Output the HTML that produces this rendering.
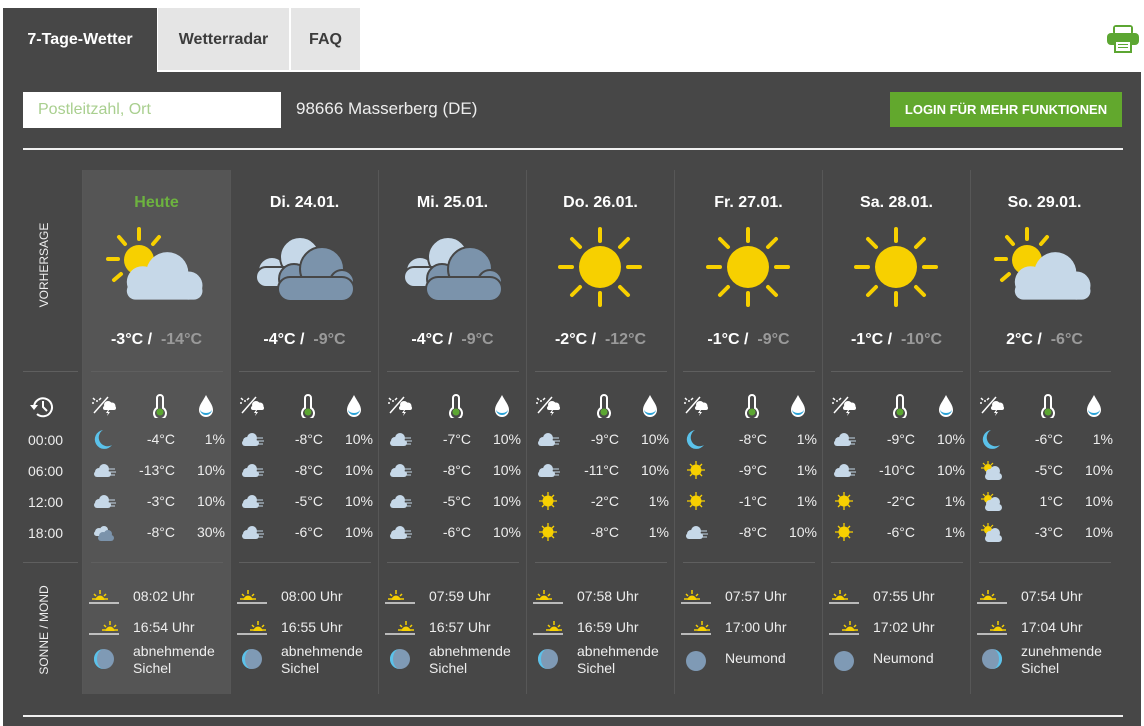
<!DOCTYPE html>
<html><head><meta charset="utf-8">
<style>
*{margin:0;padding:0;box-sizing:border-box}
body{width:1144px;height:726px;background:#fff;font-family:"Liberation Sans",Arial,sans-serif;position:relative;overflow:hidden;color:#fff}
.abs{position:absolute}
#main{position:absolute;left:3px;top:72px;width:1138px;height:654px;background:#474747}
.tab{position:absolute;top:8px;height:64px;line-height:64px;text-align:center;font-weight:bold;font-size:16px}
.col{position:absolute;top:170px;width:148px;height:524px;border-right:1px solid #575757}
.col.today{background:#555}
.day{position:absolute;top:24px;left:0;width:147px;text-align:center;font-weight:bold;font-size:16px}
.big{position:absolute;top:57px;left:23px}
.tmp{position:absolute;top:161px;left:0;width:147px;text-align:center;font-weight:bold;font-size:16px}
.tmp span{color:#9a9a9a;font-weight:bold}
.hr{position:absolute;left:8px;width:132px;height:1px;background:#5f5f5f}
.hd{position:absolute;top:224px}
.r{position:absolute;left:0;width:147px;height:20px;font-size:14px;line-height:20px;color:#eee}
.r svg{position:absolute;left:8px;top:0}
.r .t{position:absolute;right:55px}
.r .p{position:absolute;right:5px}
.ss{position:absolute;left:0;width:147px;height:20px;font-size:14px;line-height:20px;color:#eee}
.ss svg{position:absolute;left:5px;top:0}
.ss .u{position:absolute;left:50px}
.mo{position:absolute;left:0;top:473px;width:147px;font-size:14px;line-height:17px;color:#eee}
.mo svg{position:absolute;left:10px;top:5px}
.mo .u{position:absolute;left:50px;top:0}
</style></head><body>
<svg width="0" height="0" style="position:absolute">
<defs>
<symbol id="cloudL" viewBox="0 0 100 60"><g fill="#c6d8e8"><circle cx="28" cy="38" r="18"/><circle cx="56" cy="28" r="24"/><circle cx="80" cy="42" r="16"/><rect x="10" y="38" width="86" height="20" rx="10"/></g></symbol>
<symbol id="sc" viewBox="0 0 100 80"><g stroke="#f7d000" stroke-width="4" stroke-linecap="round"><line x1="33" y1="2" x2="33" y2="12"/><line x1="13" y1="10" x2="19" y2="17"/><line x1="53" y1="10" x2="47" y2="17"/><line x1="2" y1="32" x2="12" y2="32"/><line x1="8" y1="53" x2="15" y2="47"/></g><circle cx="33" cy="33" r="15" fill="#f7d000"/><use href="#cloudL" x="12" y="18" width="88" height="60"/></symbol>
<symbol id="cc" viewBox="0 0 100 80"><g fill="#c6d8e8" stroke="#474747" stroke-width="2"><circle cx="18" cy="44" r="14"/><circle cx="46" cy="30" r="20"/><rect x="2" y="40" width="64" height="20" rx="10"/></g><g fill="#7b93ab" stroke="#474747" stroke-width="2"><circle cx="40" cy="52" r="15"/><circle cx="68" cy="42" r="22"/><circle cx="88" cy="55" r="12"/><rect x="24" y="50" width="76" height="24" rx="12"/></g></symbol>
<symbol id="sun" viewBox="0 0 100 80"><g stroke="#f7d000" stroke-width="4" stroke-linecap="round"><line x1="50" y1="2" x2="50" y2="14"/><line x1="50" y1="66" x2="50" y2="78"/><line x1="10" y1="40" x2="22" y2="40"/><line x1="78" y1="40" x2="90" y2="40"/><line x1="22" y1="12" x2="30" y2="20"/><line x1="70" y1="60" x2="78" y2="68"/><line x1="78" y1="12" x2="70" y2="20"/><line x1="30" y1="60" x2="22" y2="68"/></g><circle cx="50" cy="40" r="21" fill="#f7d000"/></symbol>
<symbol id="s_moon" viewBox="0 0 26 20"><path d="M12 1 A9.5 9.5 0 1 0 21 16 A8 8 0 0 1 12 1Z" fill="#5bc2ea"/></symbol>
<symbol id="s_cl" viewBox="0 0 26 20"><g fill="#c6d8e8"><circle cx="8" cy="12" r="4"/><circle cx="13" cy="9" r="5"/><rect x="3" y="11" width="17" height="6" rx="3"/></g><g stroke="#c6d8e8" stroke-width="1"><line x1="17" y1="9" x2="24" y2="9"/><line x1="19" y1="12" x2="25" y2="12"/><line x1="19" y1="15" x2="24" y2="15"/></g></symbol>
<symbol id="s_dc" viewBox="0 0 26 20"><g fill="#c6d8e8"><circle cx="8" cy="10" r="4"/><circle cx="13" cy="8" r="4"/><rect x="3" y="9" width="14" height="5" rx="2.5"/></g><g fill="#7b93ab"><circle cx="12" cy="14" r="4"/><circle cx="17" cy="12" r="4"/><rect x="7" y="13" width="16" height="6" rx="3"/></g></symbol>
<symbol id="s_sun" viewBox="0 0 26 20"><g stroke="#f7d000" stroke-width="1.3"><line x1="13" y1="1" x2="13" y2="19"/><line x1="4" y1="10" x2="22" y2="10"/><line x1="7" y1="4" x2="19" y2="16"/><line x1="19" y1="4" x2="7" y2="16"/></g><circle cx="13" cy="10" r="5.5" fill="#f7d000"/></symbol>
<symbol id="s_sc" viewBox="0 0 26 20"><g stroke="#f7d000" stroke-width="1.2"><line x1="9" y1="1" x2="9" y2="4"/><line x1="2" y1="8" x2="5" y2="8"/><line x1="4" y1="3" x2="6" y2="5"/><line x1="14" y1="3" x2="12" y2="5"/></g><circle cx="9" cy="8" r="4" fill="#f7d000"/><g fill="#c6d8e8"><circle cx="11" cy="13" r="4"/><circle cx="16" cy="11" r="5"/><rect x="6" y="13" width="17" height="7" rx="3.5"/></g></symbol>
<symbol id="h_st" viewBox="0 0 26 22"><g stroke="#fff" stroke-width="1.5" fill="none"><line x1="3" y1="19" x2="17" y2="3"/><line x1="6" y1="6" x2="6" y2="8"/><line x1="1" y1="9" x2="3" y2="9"/><line x1="2" y1="4" x2="4" y2="6"/><line x1="10" y1="4" x2="8" y2="6"/></g><g fill="#fff"><circle cx="17" cy="11" r="4"/><circle cx="21" cy="12" r="3.5"/><rect x="12" y="12" width="13" height="4" rx="2"/><path d="M17 16 l-2 3 h2 l-1 3 l3 -4 h-2 l1 -2z"/></g></symbol>
<symbol id="h_th" viewBox="0 0 18 24"><path d="M6 14 V4 a3 3 0 0 1 6 0 V14 a6 6 0 1 1 -6 0Z" fill="none" stroke="#fff" stroke-width="2"/><circle cx="9" cy="18" r="3.5" fill="#5ca632"/></symbol>
<symbol id="h_dr" viewBox="0 0 18 24"><path d="M9 1 C6 7 2 11 2 16 a7 7 0 0 0 14 0 C16 11 12 7 9 1Z" fill="#fff"/><path d="M3 15 a6 6 0 0 0 12 0 a6 4 0 0 1 -12 0Z" fill="#2aa2d6"/></symbol>
<symbol id="sr" viewBox="0 0 32 20"><g stroke="#f7d000" stroke-width="1.5"><line x1="12" y1="4" x2="12" y2="8"/><line x1="6" y1="8" x2="8" y2="10"/><line x1="18" y1="8" x2="16" y2="10"/><line x1="4" y1="13" x2="8" y2="13"/><line x1="16" y1="13" x2="20" y2="13"/></g><path d="M7.5 14 a4.5 4.5 0 0 1 9 0Z" fill="#f7d000"/><line x1="1" y1="17" x2="31" y2="17" stroke="#fff" stroke-width="1.2"/></symbol>
<symbol id="ss" viewBox="0 0 32 20"><g stroke="#f7d000" stroke-width="1.5"><line x1="22" y1="4" x2="22" y2="8"/><line x1="16" y1="8" x2="18" y2="10"/><line x1="28" y1="8" x2="26" y2="10"/><line x1="14" y1="13" x2="18" y2="13"/><line x1="26" y1="13" x2="30" y2="13"/></g><path d="M17.5 14 a4.5 4.5 0 0 1 9 0Z" fill="#f7d000"/><line x1="1" y1="17" x2="31" y2="17" stroke="#fff" stroke-width="1.2"/></symbol>
<symbol id="mw" viewBox="0 0 22 22"><circle cx="11" cy="11" r="10" fill="#7f9ab5"/><path d="M11 1 A10 10 0 0 0 11 21 A7 10 0 0 1 11 1Z" fill="#5bc2ea"/></symbol>
<symbol id="mx" viewBox="0 0 22 22"><circle cx="11" cy="11" r="10" fill="#7f9ab5"/><path d="M11 1 A10 10 0 0 1 11 21 A7 10 0 0 0 11 1Z" fill="#5bc2ea"/></symbol>
<symbol id="mn" viewBox="0 0 22 22"><circle cx="11" cy="11" r="10" fill="#7f9ab5"/></symbol>
</defs></svg>

<div class="abs" style="left:3px;top:8px;width:154px;height:64px;background:#474747"></div>
<div class="tab" style="left:3px;width:154px;color:#fff">7-Tage-Wetter</div>
<div class="tab" style="left:158px;width:131px;background:#e5e5e5;color:#3c3c3c;height:62px">Wetterradar</div>
<div class="tab" style="left:291px;width:69px;background:#e5e5e5;color:#3c3c3c;height:62px">FAQ</div>
<svg class="abs" style="left:1106px;top:25px" width="34" height="28" viewBox="0 0 34 28"><rect x="7" y="0" width="20" height="10" rx="3" fill="#5ca632"/><rect x="9" y="2" width="16" height="8" fill="#fff"/><rect x="1" y="8" width="32" height="12" rx="4" fill="#5ca632"/><rect x="8" y="15" width="18" height="13" fill="#5ca632"/><rect x="10" y="17" width="14" height="9" fill="#fff"/><g stroke="#5ca632"><line x1="12" y1="19.5" x2="22" y2="19.5"/><line x1="12" y1="22.5" x2="22" y2="22.5"/></g></svg>

<div id="main"></div>
<div class="abs" style="left:23px;top:92px;width:258px;height:36px;background:#fff;color:#a9cf8f;font-size:16px;line-height:36px;padding-left:15px">Postleitzahl, Ort</div>
<div class="abs" style="left:296px;top:99px;font-size:17px;color:#eee">98666 Masserberg (DE)</div>
<div class="abs" style="left:890px;top:92px;width:232px;height:35px;background:#62a82d;font-size:13px;font-weight:bold;text-align:center;line-height:35px">LOGIN FÜR MEHR FUNKTIONEN</div>
<div class="abs" style="left:23px;top:148px;width:1100px;height:2px;background:#f0f0f0"></div>
<div class="abs" style="left:23px;top:715px;width:1100px;height:2px;background:#f0f0f0"></div>

<div class="abs" style="left:82px;top:170px;width:1px;height:524px;background:#575757"></div>
<div class="abs" style="left:37px;top:310px;transform:rotate(-90deg);transform-origin:0 0;font-size:12px;color:#eee;width:90px;text-align:center">VORHERSAGE</div>
<div class="abs" style="left:23px;top:371px;width:55px;height:1px;background:#5f5f5f"></div>
<div class="abs" style="left:23px;top:562px;width:55px;height:1px;background:#5f5f5f"></div>
<svg class="abs" style="left:28px;top:394px" width="28" height="26" viewBox="0 0 28 26"><path d="M6 13 A9 9 0 1 1 9 20" fill="none" stroke="#fff" stroke-width="2"/><path d="M2 11 L6 16 L10 11Z" fill="#fff"/><path d="M15 7 V13 L19 17" fill="none" stroke="#fff" stroke-width="2"/></svg>
<div class="abs" style="left:28px;top:430px;font-size:14px;line-height:20px;color:#eee">00:00<br><span style="position:relative;top:11px">06:00</span><br><span style="position:relative;top:22px">12:00</span><br><span style="position:relative;top:33px">18:00</span></div>
<div class="abs" style="left:37px;top:676px;transform:rotate(-90deg);transform-origin:0 0;font-size:12px;color:#eee;width:92px;text-align:center">SONNE / MOND</div>

<!-- col 0 -->
<div class="col today" style="left:83px">
<div class="day" style="color:#6db33f">Heute</div>
<svg class="big" width="100" height="80"><use href="#sc"/></svg>
<div class="tmp">-3°C / &nbsp;<span>-14°C</span></div>
<div class="hr" style="top:201px"></div>
<svg class="hd" style="left:8px" width="26" height="22"><use href="#h_st"/></svg><svg class="hd" style="left:68px" width="18" height="24"><use href="#h_th"/></svg><svg class="hd" style="left:114px" width="18" height="24"><use href="#h_dr"/></svg>
<div class="r" style="top:259px"><svg width="26" height="20"><use href="#s_moon"/></svg><span class="t">-4°C</span><span class="p">1%</span></div>
<div class="r" style="top:290px"><svg width="26" height="20"><use href="#s_cl"/></svg><span class="t">-13°C</span><span class="p">10%</span></div>
<div class="r" style="top:321px"><svg width="26" height="20"><use href="#s_cl"/></svg><span class="t">-3°C</span><span class="p">10%</span></div>
<div class="r" style="top:352px"><svg width="26" height="20"><use href="#s_dc"/></svg><span class="t">-8°C</span><span class="p">30%</span></div>
<div class="hr" style="top:392px"></div>
<div class="ss" style="top:416px"><svg width="32" height="20"><use href="#sr"/></svg><span class="u">08:02 Uhr</span></div>
<div class="ss" style="top:447px"><svg width="32" height="20"><use href="#ss"/></svg><span class="u">16:54 Uhr</span></div>
<div class="mo"><svg width="22" height="22"><use href="#mw"/></svg><span class="u">abnehmende<br>Sichel</span></div>
</div>

<!-- col 1 -->
<div class="col" style="left:231px">
<div class="day">Di. 24.01.</div>
<svg class="big" width="100" height="80"><use href="#cc"/></svg>
<div class="tmp">-4°C / &nbsp;<span>-9°C</span></div>
<div class="hr" style="top:201px"></div>
<svg class="hd" style="left:8px" width="26" height="22"><use href="#h_st"/></svg><svg class="hd" style="left:68px" width="18" height="24"><use href="#h_th"/></svg><svg class="hd" style="left:114px" width="18" height="24"><use href="#h_dr"/></svg>
<div class="r" style="top:259px"><svg width="26" height="20"><use href="#s_cl"/></svg><span class="t">-8°C</span><span class="p">10%</span></div>
<div class="r" style="top:290px"><svg width="26" height="20"><use href="#s_cl"/></svg><span class="t">-8°C</span><span class="p">10%</span></div>
<div class="r" style="top:321px"><svg width="26" height="20"><use href="#s_cl"/></svg><span class="t">-5°C</span><span class="p">10%</span></div>
<div class="r" style="top:352px"><svg width="26" height="20"><use href="#s_cl"/></svg><span class="t">-6°C</span><span class="p">10%</span></div>
<div class="hr" style="top:392px"></div>
<div class="ss" style="top:416px"><svg width="32" height="20"><use href="#sr"/></svg><span class="u">08:00 Uhr</span></div>
<div class="ss" style="top:447px"><svg width="32" height="20"><use href="#ss"/></svg><span class="u">16:55 Uhr</span></div>
<div class="mo"><svg width="22" height="22"><use href="#mw"/></svg><span class="u">abnehmende<br>Sichel</span></div>
</div>

<!-- col 2 -->
<div class="col" style="left:379px">
<div class="day">Mi. 25.01.</div>
<svg class="big" width="100" height="80"><use href="#cc"/></svg>
<div class="tmp">-4°C / &nbsp;<span>-9°C</span></div>
<div class="hr" style="top:201px"></div>
<svg class="hd" style="left:8px" width="26" height="22"><use href="#h_st"/></svg><svg class="hd" style="left:68px" width="18" height="24"><use href="#h_th"/></svg><svg class="hd" style="left:114px" width="18" height="24"><use href="#h_dr"/></svg>
<div class="r" style="top:259px"><svg width="26" height="20"><use href="#s_cl"/></svg><span class="t">-7°C</span><span class="p">10%</span></div>
<div class="r" style="top:290px"><svg width="26" height="20"><use href="#s_cl"/></svg><span class="t">-8°C</span><span class="p">10%</span></div>
<div class="r" style="top:321px"><svg width="26" height="20"><use href="#s_cl"/></svg><span class="t">-5°C</span><span class="p">10%</span></div>
<div class="r" style="top:352px"><svg width="26" height="20"><use href="#s_cl"/></svg><span class="t">-6°C</span><span class="p">10%</span></div>
<div class="hr" style="top:392px"></div>
<div class="ss" style="top:416px"><svg width="32" height="20"><use href="#sr"/></svg><span class="u">07:59 Uhr</span></div>
<div class="ss" style="top:447px"><svg width="32" height="20"><use href="#ss"/></svg><span class="u">16:57 Uhr</span></div>
<div class="mo"><svg width="22" height="22"><use href="#mw"/></svg><span class="u">abnehmende<br>Sichel</span></div>
</div>

<!-- col 3 -->
<div class="col" style="left:527px">
<div class="day">Do. 26.01.</div>
<svg class="big" width="100" height="80"><use href="#sun"/></svg>
<div class="tmp">-2°C / &nbsp;<span>-12°C</span></div>
<div class="hr" style="top:201px"></div>
<svg class="hd" style="left:8px" width="26" height="22"><use href="#h_st"/></svg><svg class="hd" style="left:68px" width="18" height="24"><use href="#h_th"/></svg><svg class="hd" style="left:114px" width="18" height="24"><use href="#h_dr"/></svg>
<div class="r" style="top:259px"><svg width="26" height="20"><use href="#s_cl"/></svg><span class="t">-9°C</span><span class="p">10%</span></div>
<div class="r" style="top:290px"><svg width="26" height="20"><use href="#s_cl"/></svg><span class="t">-11°C</span><span class="p">10%</span></div>
<div class="r" style="top:321px"><svg width="26" height="20"><use href="#s_sun"/></svg><span class="t">-2°C</span><span class="p">1%</span></div>
<div class="r" style="top:352px"><svg width="26" height="20"><use href="#s_sun"/></svg><span class="t">-8°C</span><span class="p">1%</span></div>
<div class="hr" style="top:392px"></div>
<div class="ss" style="top:416px"><svg width="32" height="20"><use href="#sr"/></svg><span class="u">07:58 Uhr</span></div>
<div class="ss" style="top:447px"><svg width="32" height="20"><use href="#ss"/></svg><span class="u">16:59 Uhr</span></div>
<div class="mo"><svg width="22" height="22"><use href="#mw"/></svg><span class="u">abnehmende<br>Sichel</span></div>
</div>

<!-- col 4 -->
<div class="col" style="left:675px">
<div class="day">Fr. 27.01.</div>
<svg class="big" width="100" height="80"><use href="#sun"/></svg>
<div class="tmp">-1°C / &nbsp;<span>-9°C</span></div>
<div class="hr" style="top:201px"></div>
<svg class="hd" style="left:8px" width="26" height="22"><use href="#h_st"/></svg><svg class="hd" style="left:68px" width="18" height="24"><use href="#h_th"/></svg><svg class="hd" style="left:114px" width="18" height="24"><use href="#h_dr"/></svg>
<div class="r" style="top:259px"><svg width="26" height="20"><use href="#s_moon"/></svg><span class="t">-8°C</span><span class="p">1%</span></div>
<div class="r" style="top:290px"><svg width="26" height="20"><use href="#s_sun"/></svg><span class="t">-9°C</span><span class="p">1%</span></div>
<div class="r" style="top:321px"><svg width="26" height="20"><use href="#s_sun"/></svg><span class="t">-1°C</span><span class="p">1%</span></div>
<div class="r" style="top:352px"><svg width="26" height="20"><use href="#s_cl"/></svg><span class="t">-8°C</span><span class="p">10%</span></div>
<div class="hr" style="top:392px"></div>
<div class="ss" style="top:416px"><svg width="32" height="20"><use href="#sr"/></svg><span class="u">07:57 Uhr</span></div>
<div class="ss" style="top:447px"><svg width="32" height="20"><use href="#ss"/></svg><span class="u">17:00 Uhr</span></div>
<div class="mo" style="top:480px"><svg width="22" height="22" style="top:0"><use href="#mn"/></svg><span class="u">Neumond</span></div>
</div>

<!-- col 5 -->
<div class="col" style="left:823px">
<div class="day">Sa. 28.01.</div>
<svg class="big" width="100" height="80"><use href="#sun"/></svg>
<div class="tmp">-1°C / &nbsp;<span>-10°C</span></div>
<div class="hr" style="top:201px"></div>
<svg class="hd" style="left:8px" width="26" height="22"><use href="#h_st"/></svg><svg class="hd" style="left:68px" width="18" height="24"><use href="#h_th"/></svg><svg class="hd" style="left:114px" width="18" height="24"><use href="#h_dr"/></svg>
<div class="r" style="top:259px"><svg width="26" height="20"><use href="#s_cl"/></svg><span class="t">-9°C</span><span class="p">10%</span></div>
<div class="r" style="top:290px"><svg width="26" height="20"><use href="#s_cl"/></svg><span class="t">-10°C</span><span class="p">10%</span></div>
<div class="r" style="top:321px"><svg width="26" height="20"><use href="#s_sun"/></svg><span class="t">-2°C</span><span class="p">1%</span></div>
<div class="r" style="top:352px"><svg width="26" height="20"><use href="#s_sun"/></svg><span class="t">-6°C</span><span class="p">1%</span></div>
<div class="hr" style="top:392px"></div>
<div class="ss" style="top:416px"><svg width="32" height="20"><use href="#sr"/></svg><span class="u">07:55 Uhr</span></div>
<div class="ss" style="top:447px"><svg width="32" height="20"><use href="#ss"/></svg><span class="u">17:02 Uhr</span></div>
<div class="mo" style="top:480px"><svg width="22" height="22" style="top:0"><use href="#mn"/></svg><span class="u">Neumond</span></div>
</div>

<!-- col 6 -->
<div class="col" style="left:971px;border-right:none">
<div class="day">So. 29.01.</div>
<svg class="big" width="100" height="80"><use href="#sc"/></svg>
<div class="tmp">2°C / &nbsp;<span>-6°C</span></div>
<div class="hr" style="top:201px"></div>
<svg class="hd" style="left:8px" width="26" height="22"><use href="#h_st"/></svg><svg class="hd" style="left:68px" width="18" height="24"><use href="#h_th"/></svg><svg class="hd" style="left:114px" width="18" height="24"><use href="#h_dr"/></svg>
<div class="r" style="top:259px"><svg width="26" height="20"><use href="#s_moon"/></svg><span class="t">-6°C</span><span class="p">1%</span></div>
<div class="r" style="top:290px"><svg width="26" height="20"><use href="#s_sc"/></svg><span class="t">-5°C</span><span class="p">10%</span></div>
<div class="r" style="top:321px"><svg width="26" height="20"><use href="#s_sc"/></svg><span class="t">1°C</span><span class="p">10%</span></div>
<div class="r" style="top:352px"><svg width="26" height="20"><use href="#s_sc"/></svg><span class="t">-3°C</span><span class="p">10%</span></div>
<div class="hr" style="top:392px"></div>
<div class="ss" style="top:416px"><svg width="32" height="20"><use href="#sr"/></svg><span class="u">07:54 Uhr</span></div>
<div class="ss" style="top:447px"><svg width="32" height="20"><use href="#ss"/></svg><span class="u">17:04 Uhr</span></div>
<div class="mo"><svg width="22" height="22"><use href="#mx"/></svg><span class="u">zunehmende<br>Sichel</span></div>
</div>
</body></html>
